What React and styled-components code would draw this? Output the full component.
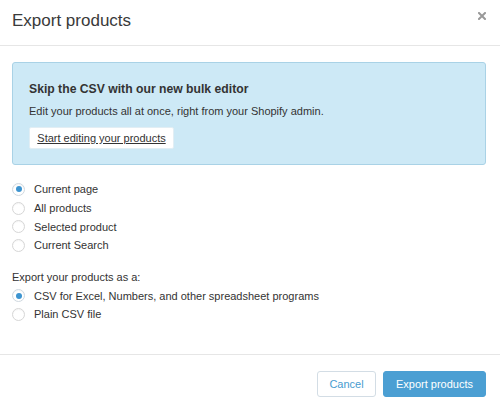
import React from "react";
import styled, { createGlobalStyle } from "styled-components";

const Global = createGlobalStyle`
  html, body { margin: 0; padding: 0; background: #fff; }
  body { font-family: "Liberation Sans", Arial, sans-serif; color: #333; -webkit-font-smoothing: antialiased; }
  * { box-sizing: border-box; }
`;

const Modal = styled.div`
  width: 500px;
  height: 408px;
  display: flex;
  flex-direction: column;
  background: #fff;
`;

const Header = styled.div`
  height: 46px;
  display: flex;
  align-items: center;
  justify-content: space-between;
  padding: 0 12px 4px 12px;
  border-bottom: 1px solid #e6e6e6;
`;

const Title = styled.h2`
  margin: 0;
  font-size: 17px;
  font-weight: 400;
  color: #3a3a3a;
`;

const Close = styled.button`
  border: 0;
  background: none;
  padding: 0;
  margin-top: -10px;
  width: 12px;
  height: 12px;
  display: flex;
  align-items: center;
  justify-content: center;
  cursor: pointer;
`;

const Body = styled.div`
  flex: 1;
  padding: 16px 14px 0 12px;
  border-bottom: 1px solid #e6e6e6;
`;

const Callout = styled.div`
  background: #cde9f6;
  border: 1px solid #a9d2e6;
  border-radius: 3px;
  height: 103px;
  padding: 17px 16px 0 16px;
`;

const CalloutTitle = styled.h3`
  margin: 0;
  font-size: 12.2px;
  font-weight: 700;
  line-height: 18px;
  color: #333;
`;

const CalloutText = styled.p`
  margin: 5px 0 0;
  font-size: 11px;
  line-height: 17px;
  color: #333;
`;

const LinkButton = styled.button`
  margin-top: 7px;
  height: 22px;
  width: 145px;
  padding: 0;
  background: #fff;
  border: 1px solid #e2eef4;
  border-radius: 2px;
  font-family: inherit;
  font-size: 11px;
  color: #333;
  text-decoration: underline;
  cursor: pointer;
`;

const Group = styled.div`
  display: flex;
  flex-direction: column;
  margin-top: ${(p) => p.$mt}px;
`;

const Row = styled.label`
  display: flex;
  align-items: center;
  height: 18.7px;
  font-size: 11px;
  color: #333;
  gap: 9px;
`;

const Radio = styled.span`
  width: 13px;
  height: 13px;
  border-radius: 50%;
  border: 1px solid ${(p) => (p.$checked ? "#cfd8df" : "#d6d6d6")};
  background: #fff;
  display: flex;
  align-items: center;
  justify-content: center;
  box-shadow: inset 0 1px 1px rgba(0,0,0,0.04);
  &::after {
    content: "";
    width: 6px;
    height: 6px;
    border-radius: 50%;
    background: ${(p) => (p.$checked ? "#3d94d0" : "transparent")};
  }
`;

const Label = styled.div`
  font-size: 11px;
  color: #333;
  height: 18.7px;
  display: flex;
  align-items: center;
  margin-top: 13px;
`;

const Footer = styled.div`
  height: 53px;
  display: flex;
  justify-content: flex-end;
  align-items: flex-start;
  padding: 16px 14px 0 0;
  gap: 7px;
`;

const Button = styled.button`
  height: 26px;
  width: ${(p) => (p.$primary ? 103 : 59)}px;
  padding: 0;
  border-radius: 3px;
  font-family: inherit;
  font-size: 11px;
  border: 1px solid ${(p) => (p.$primary ? "#4b9fd3" : "#d3dde5")};
  background: ${(p) => (p.$primary ? "#4b9fd3" : "#fff")};
  color: ${(p) => (p.$primary ? "#fff" : "#479ccf")};
  cursor: pointer;
`;

const scopes = [
  ["Current page", true],
  ["All products", false],
  ["Selected product", false],
  ["Current Search", false],
];

const formats = [
  ["CSV for Excel, Numbers, and other spreadsheet programs", true],
  ["Plain CSV file", false],
];

export default function App() {
  return (
    <>
      <Global />
      <Modal>
        <Header>
          <Title>Export products</Title>
          <Close aria-label="Close">
            <svg width="8" height="8" viewBox="0 0 8 8">
              <path d="M1 1L7 7M7 1L1 7" stroke="#999" strokeWidth="2" strokeLinecap="square" />
            </svg>
          </Close>
        </Header>
        <Body>
          <Callout>
            <CalloutTitle>Skip the CSV with our new bulk editor</CalloutTitle>
            <CalloutText>Edit your products all at once, right from your Shopify admin.</CalloutText>
            <LinkButton>Start editing your products</LinkButton>
          </Callout>
          <Group $mt={15}>
            {scopes.map(([t, c]) => (
              <Row key={t}>
                <Radio $checked={c} />
                {t}
              </Row>
            ))}
          </Group>
          <Label>Export your products as a:</Label>
          <Group $mt={0}>
            {formats.map(([t, c]) => (
              <Row key={t}>
                <Radio $checked={c} />
                {t}
              </Row>
            ))}
          </Group>
        </Body>
        <Footer>
          <Button>Cancel</Button>
          <Button $primary>Export products</Button>
        </Footer>
      </Modal>
    </>
  );
}
